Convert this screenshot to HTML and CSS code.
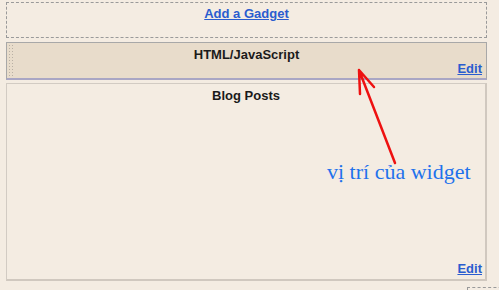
FILE: index.html
```html
<!DOCTYPE html>
<html>
<head>
<meta charset="utf-8">
<link rel="stylesheet" href="styles.css">
</head>
<body>
<div class="page">
  <div class="column">
    <div class="add-box"><a class="link" href="#">Add a Gadget</a></div>
    <div class="widget html-widget">
      <span class="grip"></span>
      <div class="title">HTML/JavaScript</div>
      <a class="link edit" href="#">Edit</a>
    </div>
    <div class="widget posts-widget">
      <div class="title">Blog Posts</div>
      <a class="link edit" href="#">Edit</a>
    </div>
  </div>
  <div class="corner"></div>
  <svg class="arrow" width="499" height="290" viewBox="0 0 499 290">
    <path d="M395 163 L359 70 M359 70 L360 94 M359 70 L374 87" stroke="#ee1111" stroke-width="2.5" fill="none" stroke-linecap="round"/>
  </svg>
  <div class="note">vị trí của widget</div>
</div>
</body>
</html>
```
FILE: styles.css
```css
* { box-sizing: border-box; }
html, body { margin: 0; padding: 0; }
body {
  background: #f4ece2;
  font-family: "Liberation Sans", Arial, sans-serif;
  width: 499px;
  height: 290px;
  overflow: hidden;
}
.page {
  position: relative;
  width: 499px;
  height: 290px;
}
.column {
  display: flex;
  flex-direction: column;
  margin-left: 6px;
  padding-top: 2px;
  width: 481px;
}
.link {
  color: #2a5ccf;
  font-weight: bold;
  font-size: 13px;
  text-decoration: underline;
}
.add-box {
  height: 36px;
  border: 1px dashed #9a9a9a;
  display: flex;
  justify-content: center;
  padding-top: 3px;
}
.widget {
  position: relative;
  display: flex;
  flex-direction: column;
  align-items: center;
}
.html-widget {
  margin-top: 4px;
  height: 38px;
  background: #e8dccb;
  border: 1px solid #a8a8a8;
  border-bottom: 2px solid #a9a6c4;
  padding-top: 4px;
}
.grip {
  position: absolute;
  left: 1px;
  top: 1px;
  bottom: 1px;
  width: 6px;
  background-image: radial-gradient(circle, #b9b0a4 0.8px, transparent 1px);
  background-size: 3px 3px;
}
.posts-widget {
  margin-top: 3px;
  width: 481px;
  height: 198px;
  border: 1px solid #d2cbc3;
  border-right: 2px solid #d0c8bf;
  border-bottom: 2px solid #d0c8bf;
  padding-top: 4px;
  background: #f4ece2;
}
.title {
  font-weight: bold;
  font-size: 13px;
  color: #1a1a1a;
  line-height: 15px;
}
.edit {
  position: absolute;
  right: 4px;
  bottom: 2px;
  line-height: 15px;
}
.posts-widget .edit { right: 3px; bottom: 3px; }
.corner {
  position: absolute;
  left: 467px;
  top: 287px;
  width: 40px;
  height: 10px;
  border-top: 1px dashed #9a9a9a;
  border-left: 1px dashed #9a9a9a;
}
.arrow {
  position: absolute;
  left: 0;
  top: 0;
}
.note {
  position: absolute;
  left: 327px;
  top: 159px;
  font-family: "Liberation Serif", "Times New Roman", serif;
  font-size: 22px;
  color: #1f72ec;
  white-space: nowrap;
}
```
